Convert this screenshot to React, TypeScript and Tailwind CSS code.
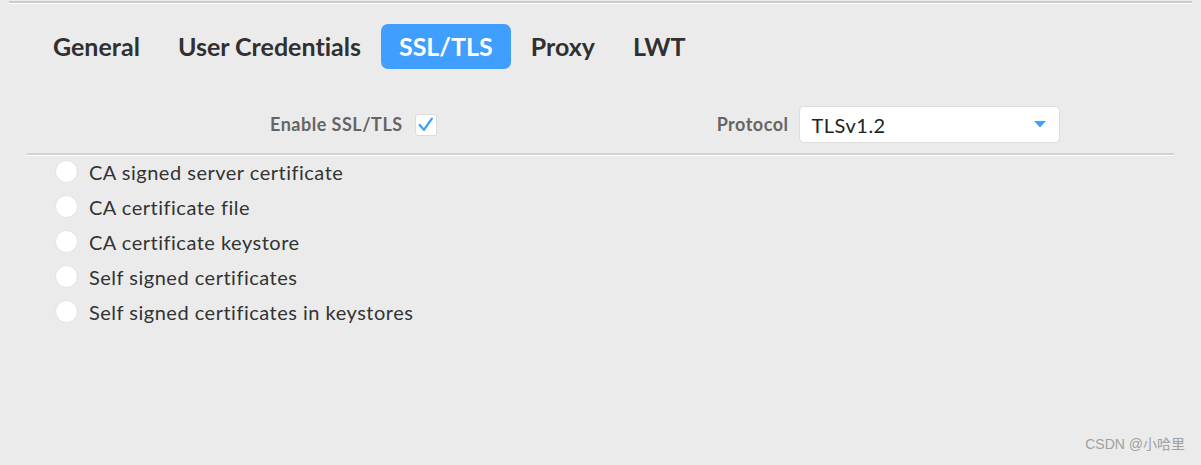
const tabs = ['General', 'User Credentials', 'SSL/TLS', 'Proxy', 'LWT'];

const options = [
  'CA signed server certificate',
  'CA certificate file',
  'CA certificate keystore',
  'Self signed certificates',
  'Self signed certificates in keystores',
];

export default function App() {
  return (
    <div
      className="relative w-[1201px] h-[465px] bg-[#ebebeb] overflow-hidden text-[#333] [font-variant-ligatures:none]"
      style={{fontFamily: 'Lato, "Noto Sans", sans-serif'}}
    >
      {/* top rule */}
      <div className="mx-[9px] pt-px">
        <div className="h-[2px] bg-[#cacaca]" />
        <div className="h-px bg-white" />
      </div>

      {/* tabs */}
      <div className="flex items-center gap-[2px] pl-[35px] mt-[20px]">
        {tabs.map(t => (
          <button
            key={t}
            className={
              t === 'SSL/TLS'
                ? 'h-[45px] px-[18px] rounded-[7px] bg-[#409eff] text-white text-[25px] font-bold'
                : 'h-[45px] px-[18px] text-[25px] font-bold text-[#303030]'
            }
          >
            {t}
          </button>
        ))}
      </div>

      {/* settings row */}
      <div className="flex items-center h-[37px] mt-[37px]">
        <span className="ml-[270px] text-[18px] font-bold tracking-[0.5px] text-[#656565]">Enable SSL/TLS</span>
        <span className="ml-[12px] w-[22px] h-[22px] rounded-[3px] bg-white border border-[#dcdcdc] flex items-center justify-center">
          <svg width="17" height="17" viewBox="0 0 16 16" fill="none">
            <path d="M2.5 8.5 L6.5 13 L14 2.5" stroke="#409eff" strokeWidth="2.2" strokeLinecap="round" strokeLinejoin="round" />
          </svg>
        </span>
        <span className="ml-[280px] text-[18px] font-bold tracking-[0.5px] text-[#656565]">Protocol</span>
        <div className="ml-[10px] w-[261px] h-[37px] bg-white rounded-[5px] border border-[#dedede] flex items-center justify-between pl-[12px] pr-[13px]">
          <span className="text-[20px] tracking-[0.5px] text-[#222]">TLSv1.2</span>
          <svg width="12" height="7" viewBox="0 0 12 7">
            <path d="M0 0 H12 L6 6.5 Z" fill="#409eff" />
          </svg>
        </div>
      </div>

      {/* divider */}
      <div className="ml-[27px] w-[1147px] mt-[10px]">
        <div className="h-[2px] bg-[#d2d2d2]" />
        <div className="h-px bg-white" />
      </div>

      {/* radio list */}
      <div className="flex flex-col pl-[55px] -mt-[2px]">
        {options.map(o => (
          <label key={o} className="flex items-center h-[35px] gap-[11px]">
            <span className="w-[23px] h-[23px] rounded-full bg-white border border-[#e2e2e2]" />
            <span className="text-[20px] tracking-[0.5px] text-[#333]">{o}</span>
          </label>
        ))}
      </div>

      <span
        className="absolute right-[16px] bottom-[10px] text-[14px] text-[#a0a0a0]"
        style={{fontFamily: '"Liberation Sans", "Noto Sans CJK SC", sans-serif'}}
      >
        CSDN @小哈里
      </span>
    </div>
  );
}
